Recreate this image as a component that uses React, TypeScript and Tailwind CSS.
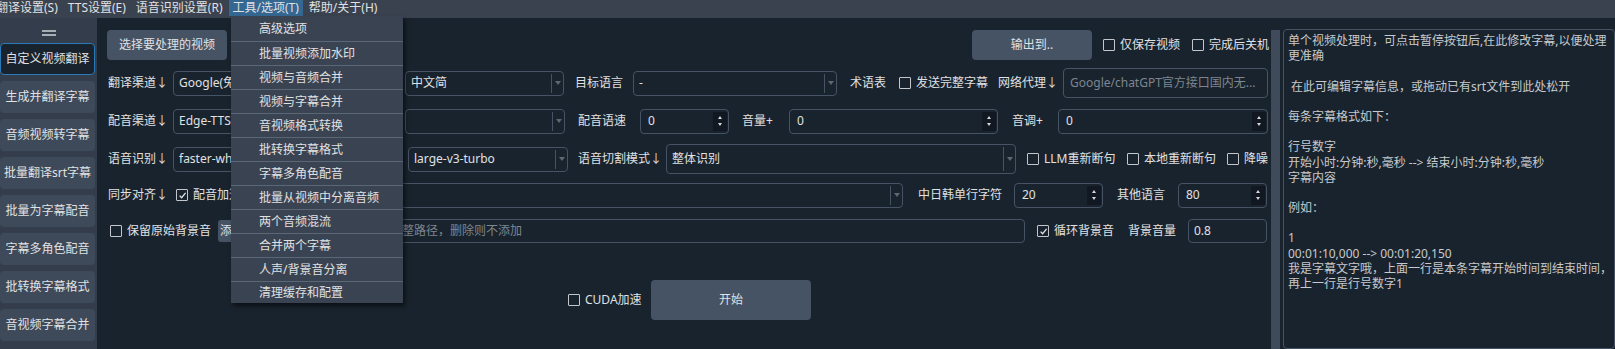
import type { ReactNode } from 'react'

const menuBar = ['翻译设置(S)', 'TTS设置(E)', '语音识别设置(R)', '工具/选项(T)', '帮助/关于(H)']

const toolItems = [
  '高级选项',
  '批量视频添加水印',
  '视频与音频合并',
  '视频与字幕合并',
  '音视频格式转换',
  '批转换字幕格式',
  '字幕多角色配音',
  '批量从视频中分离音频',
  '两个音频混流',
  '合并两个字幕',
  '人声/背景音分离',
  '清理缓存和配置'
]

const sideItems = [
  '自定义视频翻译',
  '生成并翻译字幕',
  '音频视频转字幕',
  '批量翻译srt字幕',
  '批量为字幕配音',
  '字幕多角色配音',
  '批转换字幕格式',
  '音视频字幕合并'
]

const helpLines = [
  '单个视频处理时，可点击暂停按钮后,在此修改字幕,以便处理',
  '更准确',
  '',
  ' 在此可编辑字幕信息，或拖动已有srt文件到此处松开',
  '',
  '每条字幕格式如下：',
  '',
  '行号数字',
  '开始小时:分钟:秒,毫秒 --> 结束小时:分钟:秒,毫秒',
  '字幕内容',
  '',
  '例如：',
  '',
  '1',
  '00:01:10,000 --> 00:01:20,150',
  '我是字幕文字哦，上面一行是本条字幕开始时间到结束时间，',
  '再上一行是行号数字1'
]

function Combo({ className, text }: { className: string; text?: string }) {
  return (
    <div className={`flex items-stretch border border-[#455364] rounded-[4px] bg-[#19232d] ${className}`}>
      <div className="flex-1 flex items-center pl-[5px] overflow-hidden whitespace-nowrap">{text}</div>
      <div className="w-[12px] my-[2px] border-l border-[#455364] flex items-center justify-center">
        <svg width="6" height="4" viewBox="0 0 6 4">
          <path d="M0 0h6L3 4z" fill="#5d6875" />
        </svg>
      </div>
    </div>
  )
}

function Spin({ className, value }: { className: string; value: string }) {
  return (
    <div className={`flex items-stretch border border-[#455364] rounded-[4px] bg-[#19232d] ${className}`}>
      <div className="flex-1 flex items-center pl-[7px]">{value}</div>
      <div className="w-[14px] my-[2px] mr-[1px] bg-[#111821] flex flex-col items-center justify-center gap-[4px]">
        <svg width="4" height="3" viewBox="0 0 4 3">
          <path d="M0 3h4L2 0z" fill="#d5d8dc" />
        </svg>
        <svg width="4" height="3" viewBox="0 0 4 3">
          <path d="M0 0h4L2 3z" fill="#d5d8dc" />
        </svg>
      </div>
    </div>
  )
}

function Field({ className, children }: { className: string; children?: ReactNode }) {
  return (
    <div className={`flex items-center border border-[#455364] rounded-[4px] bg-[#19232d] whitespace-nowrap overflow-hidden ${className}`}>
      {children}
    </div>
  )
}

function Check({ label, checked, className }: { label: string; checked?: boolean; className: string }) {
  return (
    <div className={`flex items-center gap-[5px] whitespace-nowrap ${className}`}>
      <div className="w-[12px] h-[12px] shrink-0 border border-[#c3c7cc] rounded-[1px] flex items-center justify-center">
        {checked && (
          <svg width="9" height="9" viewBox="0 0 9 9">
            <path d="M1.6 4.6l2 2.1L7.6 1.8" stroke="#e0e1e3" strokeWidth="1.3" fill="none" />
          </svg>
        )}
      </div>
      <span>{label}</span>
    </div>
  )
}

function Label({ className, children }: { className: string; children: ReactNode }) {
  return <div className={`whitespace-nowrap shrink-0 ${className}`}>{children}</div>
}

export default function App() {
  return (
    <div className="relative w-[1615px] h-[349px] overflow-hidden bg-[#19232d] text-[#e0e1e3] text-[12px] leading-[16px] font-['Noto_Sans','Noto_Sans_CJK_SC',sans-serif]">
      {/* menu bar */}
      <div className="h-[18px] bg-[#3a4250] flex items-start -ml-[8px]">
        {menuBar.map((m) => (
          <div
            key={m}
            className={`h-[16px] px-[4px] mr-[2px] flex items-center whitespace-nowrap ${
              m === '工具/选项(T)' ? 'bg-[#346792]' : ''
            }`}
          >
            {m}
          </div>
        ))}
      </div>

      <div className="flex h-[331px]">
        {/* sidebar */}
        <div className="w-[97px] shrink-0 bg-[#333d4b] flex flex-col">
          <div className="h-[25px] flex flex-col items-center justify-center gap-[2px] pt-[4px]">
            <div className="w-[14px] h-[2px] bg-[#a7aeb6]" />
            <div className="w-[14px] h-[2px] bg-[#a7aeb6]" />
          </div>
          <div className="flex flex-col gap-[6px] pr-[2px]">
            {sideItems.map((s, i) => (
              <div
                key={s}
                className={`h-[32px] rounded-[4px] flex items-center justify-center whitespace-nowrap ${
                  i === 0 ? 'bg-[#19232d] border border-[#2a79b8]' : 'bg-[#3e4959]'
                }`}
              >
                {s}
              </div>
            ))}
          </div>
        </div>

        {/* main */}
        <div className="w-[1174px] shrink-0 flex flex-col">
          <div className="mt-[12px] h-[30px] flex items-center">
            <div className="ml-[10px] w-[120px] h-[30px] rounded-[4px] bg-[#455364] flex items-center justify-center">
              选择要处理的视频
            </div>
            <div className="ml-[745px] w-[120px] h-[30px] rounded-[4px] bg-[#455364] flex items-center justify-center">
              输出到..
            </div>
            <Check className="ml-[11px] w-[89px]" label="仅保存视频" />
            <Check className="w-[76px]" label="完成后关机" />
          </div>

          <div className="mt-[8px] h-[30px] flex items-center">
            <Label className="ml-[11px] w-[65px]">翻译渠道↓</Label>
            <Combo className="w-[222px] h-[25px]" text="Google(免费)" />
            <Combo className="ml-[10px] w-[159px] h-[25px]" text="中文简" />
            <Label className="ml-[11px] w-[58px]">目标语言</Label>
            <Combo className="w-[204px] h-[25px]" text="-" />
            <Label className="ml-[13px] w-[36px]">术语表</Label>
            <Check className="ml-[13px] w-[89px]" label="发送完整字幕" />
            <Label className="ml-[10px] w-[65px]">网络代理↓</Label>
            <Field className="w-[205px] h-[30px] pl-[6px] text-[#7d8690]">Google/chatGPT官方接口国内无...</Field>
          </div>

          <div className="mt-[8px] h-[30px] flex items-center">
            <Label className="ml-[11px] w-[65px]">配音渠道↓</Label>
            <Combo className="w-[222px] h-[25px]" text="Edge-TTS(免费)" />
            <Combo className="ml-[10px] w-[160px] h-[25px]" />
            <Label className="ml-[13px] w-[62px]">配音语速</Label>
            <Spin className="w-[89px] h-[25px]" value="0" />
            <Label className="ml-[13px] w-[47px]">音量+</Label>
            <Spin className="w-[209px] h-[25px]" value="0" />
            <Label className="ml-[14px] w-[46px]">音调+</Label>
            <Spin className="w-[210px] h-[25px]" value="0" />
          </div>

          <div className="mt-[8px] h-[30px] flex items-center">
            <Label className="ml-[11px] w-[65px]">语音识别↓</Label>
            <Combo className="w-[225px] h-[25px]" text="faster-whisper(本地)" />
            <Combo className="ml-[10px] w-[160px] h-[25px]" text="large-v3-turbo" />
            <Label className="ml-[10px] w-[88px]">语音切割模式↓</Label>
            <Combo className="w-[350px] h-[30px]" text="整体识别" />
            <Check className="ml-[11px] w-[100px]" label="LLM重新断句" />
            <Check className="w-[100px]" label="本地重新断句" />
            <Check className="w-[41px] overflow-hidden" label="降噪" />
          </div>

          <div className="mt-[6px] h-[30px] flex items-center">
            <Label className="ml-[11px] w-[68px]">同步对齐↓</Label>
            <Check className="w-[160px]" label="配音加速" checked />
            <Combo className="w-[567px] h-[25px]" />
            <Label className="ml-[15px] w-[96px]">中日韩单行字符</Label>
            <Spin className="w-[89px] h-[25px]" value="20" />
            <Label className="ml-[14px] w-[61px]">其他语言</Label>
            <Spin className="w-[89px] h-[25px]" value="80" />
          </div>

          <div className="mt-[6px] h-[30px] flex items-center">
            <Check className="ml-[13px] w-[108px]" label="保留原始背景音" />
            <div className="w-[807px] h-[24px] flex items-center">
              <div className="w-[80px] h-[22px] rounded-[3px] bg-[#455364] flex items-center pl-[2px] whitespace-nowrap">
                添加
              </div>
              <Field className="ml-[2px] flex-1 h-[24px] pl-[5px] text-[#7d8690]">
                输入背景音频的完整路径，删除则不添加
              </Field>
            </div>
            <Check className="ml-[12px] w-[91px]" label="循环背景音" checked />
            <Label className="w-[60px]">背景音量</Label>
            <Field className="w-[79px] h-[24px] pl-[5px]">0.8</Field>
          </div>

          <div className="mt-[34px] h-[40px] flex items-center">
            <Check className="ml-[471px] w-[83px]" label="CUDA加速" />
            <div className="w-[160px] h-[40px] rounded-[4px] bg-[#455364] flex items-center justify-center">开始</div>
          </div>
        </div>

        {/* splitter */}
        <div className="w-[9px] shrink-0 mt-[12px] bg-[#3f4a5a]" />

        {/* subtitle editor */}
        <div className="ml-[3px] mt-[11px] flex-1 border border-[#455364] rounded-[4px] bg-[#19232d] pl-[4px] pt-[3px] text-[#c6cace] leading-[15.2px] overflow-hidden">
          {helpLines.map((l, i) => (
            <div key={i} className="h-[15.2px] whitespace-pre">
              {l}
            </div>
          ))}
        </div>
      </div>

      {/* open tools menu */}
      <div className="absolute left-[231px] top-[16px] w-[172px] bg-[#3a4352] shadow-[2px_3px_4px_rgba(0,0,0,0.55)]">
        {toolItems.map((t, i) => (
          <div
            key={t}
            className={`flex items-center pl-[28px] whitespace-nowrap ${
              i === 0 ? 'h-[25px]' : i === toolItems.length - 1 ? 'h-[22px] border-t border-[#5b6676]' : 'h-[24px] border-t border-[#5b6676]'
            }`}
          >
            {t}
          </div>
        ))}
      </div>
    </div>
  )
}
